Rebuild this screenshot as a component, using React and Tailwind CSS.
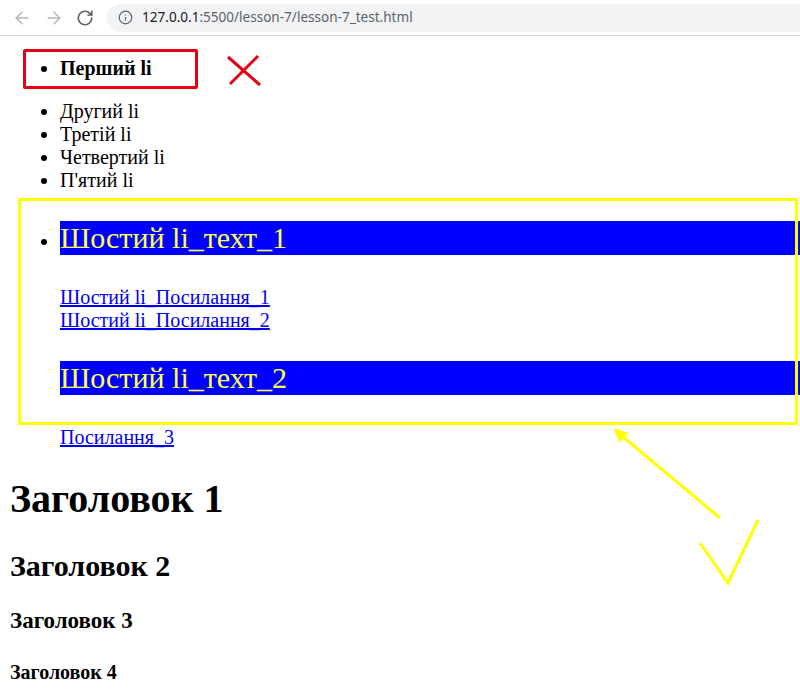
import { ArrowLeft, ArrowRight, RotateCw, Info } from "lucide-react";

const simpleItems = ["Другий li", "Третій li", "Четвертий li", "П'ятий li"];

function Toolbar() {
    return (
        <div className="h-[36px] flex items-center border-b border-[#d9d9d9] bg-white font-['Noto_Sans',sans-serif]">
            <ArrowLeft className="ml-[12px] w-[20px] h-[20px] text-[#b4b6b8]" strokeWidth={1.8} />
            <ArrowRight className="ml-[12px] w-[20px] h-[20px] text-[#b4b6b8]" strokeWidth={1.8} />
            <RotateCw className="ml-[12px] w-[18px] h-[18px] text-[#5f6368]" strokeWidth={2.2} />
            <div className="ml-[13px] flex-1 h-[28px] flex items-center rounded-l-full bg-[#f1f3f4]">
                <Info className="ml-[11px] w-[15px] h-[15px] text-[#5f6368]" strokeWidth={2} />
                <span className="ml-[9px] text-[13.55px] text-[#5f6368]">
                    <span className="text-[#202124]">127.0.0.1</span>:5500/lesson-7/lesson-7_test.html
                </span>
            </div>
        </div>
    );
}

function Annotations() {
    return (
        <>
            <div className="absolute left-[23px] top-[49px] w-[175px] h-[40px] border-[3px] border-[#e60012] rounded-[2px]" />
            <div className="absolute left-[18px] top-[198px] w-[780px] h-[227px] border-[3px] border-[#ffff00] rounded-[2px]" />
            <svg className="absolute left-0 top-0" width="800" height="700" fill="none">
                <path d="M228 57L260 85M258 56L230 84" stroke="#e60012" strokeWidth="3" />
                <path d="M720 518L622 436" stroke="#ffff00" strokeWidth="3" />
                <path d="M614 429L628 433L620 442Z" fill="#ffff00" stroke="#ffff00" />
                <path d="M700 543L728 583L758 520" stroke="#ffff00" strokeWidth="3" />
            </svg>
        </>
    );
}

export default function App() {
    return (
        <div className="relative h-[700px] overflow-hidden bg-white text-black font-['Liberation_Serif',serif]">
            <Toolbar />
            <ul className="mt-[21px] pl-[60px] list-disc text-[20px] leading-[23px]">
                <li className="font-bold mb-[20px]">Перший li</li>
                {simpleItems.map((item) => (
                    <li key={item}>{item}</li>
                ))}
                <li className="mt-[29px]">
                    <p className="bg-[#0000ff] text-[#ffff4d] text-[30px] leading-[34px]">Шостий li_техт_1</p>
                    <a href="#" className="block w-fit mt-[31px] text-[#0000ee] underline">Шостий li_Посилання_1</a>
                    <a href="#" className="block w-fit text-[#0000ee] underline">Шостий li_Посилання_2</a>
                    <p className="mt-[29px] bg-[#0000ff] text-[#ffff4d] text-[30px] leading-[34px]">Шостий li_техт_2</p>
                    <a href="#" className="block w-fit mt-[31px] text-[#0000ee] underline">Посилання_3</a>
                </li>
            </ul>
            <div className="pl-[10px] font-bold">
                <h1 className="mt-[27px] text-[40px] leading-[46px]">Заголовок 1</h1>
                <h2 className="mt-[27px] text-[30px] leading-[34px]">Заголовок 2</h2>
                <h3 className="mt-[25px] text-[23px] leading-[26px]">Заголовок 3</h3>
                <h4 className="mt-[27px] text-[20px] leading-[23px]">Заголовок 4</h4>
            </div>
            <Annotations />
        </div>
    );
}
